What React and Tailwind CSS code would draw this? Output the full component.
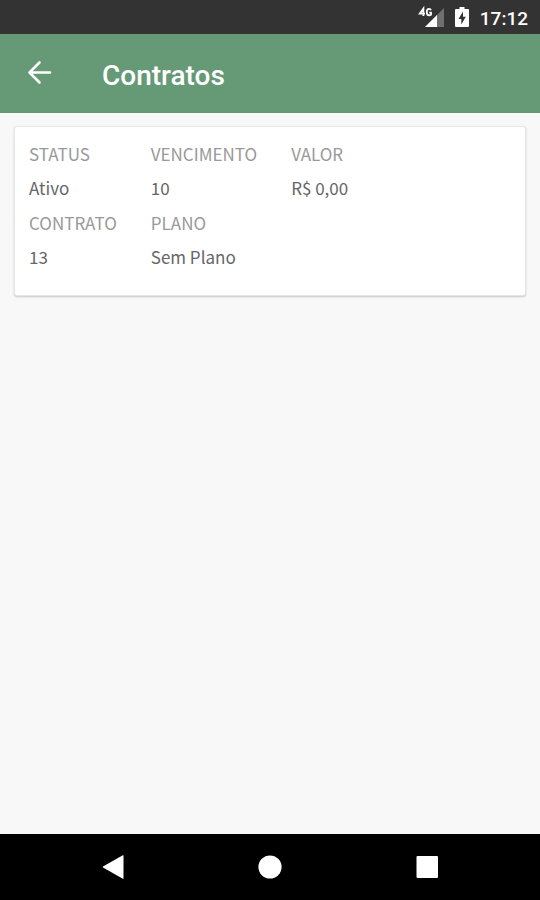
import React from 'react';

const contract = [
  { label: 'STATUS', value: 'Ativo' },
  { label: 'VENCIMENTO', value: '10' },
  { label: 'VALOR', value: 'R$ 0,00' },
  { label: 'CONTRATO', value: '13' },
  { label: 'PLANO', value: 'Sem Plano' },
];

const SignalIcon = () => (
  <svg className="w-7 h-6" viewBox="0 0 28 24" aria-hidden="true">
    <path d="M26 3V22H7Z" fill="#6f6f6f" />
    <path d="M19 10V22H7Z" fill="#fff" />
    {/* 4G mark */}
    <path d="M5.4 11V3.6L1.8 8.6H7" fill="none" stroke="#fff" strokeWidth="1.8" />
    <path d="M13 5.2C12.5 4.1 11.8 3.8 11 3.8C9.5 3.8 8.8 5 8.8 7.1C8.8 9.4 9.6 10.4 11 10.4C11.8 10.4 12.6 10.1 13 9.6V7.6H11.2" fill="none" stroke="#fff" strokeWidth="1.8" />
  </svg>
);

const BatteryIcon = () => (
  <svg className="w-4 h-6" viewBox="0 0 16 24" aria-hidden="true">
    <path d="M5.5 2H10.5V4H14Q15 4 15 5V21Q15 22 14 22H2Q1 22 1 21V5Q1 4 2 4H5.5Z" fill="#fff" />
    <path d="M9 6.5L4.5 14H7.3V19.5L11.8 11.8H9Z" fill="#333" />
  </svg>
);

const StatusBar = () => (
  <div className="h-[34px] shrink-0 bg-[#333333] flex items-center justify-end pr-3 text-white">
    <SignalIcon />
    <div className="ml-2">
      <BatteryIcon />
    </div>
    <span className="ml-[10px] mt-1 text-[19px] leading-6 font-medium">17:12</span>
  </div>
);

const Header = () => (
  <header className="h-[79px] shrink-0 bg-[#669975] flex items-center pl-6 text-white">
    <button type="button" aria-label="Voltar" className="w-8 h-8 mb-1 flex items-center justify-center">
      <svg className="w-8 h-8" viewBox="0 0 32 32" fill="none" stroke="currentColor" strokeWidth="2.6" strokeLinecap="round" strokeLinejoin="round">
        <path d="M26 16.5H5.5M15.5 6.5L5.5 16.5L15.5 26.5" />
      </svg>
    </button>
    <h1 className="ml-[46px] mt-1 text-[28px] leading-8 font-medium">Contratos</h1>
  </header>
);

const ContractCard = () => (
  <section className="m-[14px] mt-[13px] px-[14px] pt-[10px] pb-[21px] bg-white rounded-[3px] border border-[#e6e6e6] shadow-[0_1px_2px_rgba(0,0,0,0.2)]">
    <dl className="grid grid-cols-[auto_auto_1fr] gap-x-[34px] gap-y-px text-[17px] leading-[34px] font-['Noto_Sans_CJK_SC',sans-serif]">
      {contract.map((field) => (
        <div key={field.label}>
          <dt className="text-[#999999]">{field.label}</dt>
          <dd className="text-[#666666]">{field.value}</dd>
        </div>
      ))}
    </dl>
  </section>
);

const NavBar = () => (
  <nav className="h-[66px] shrink-0 bg-black px-[34px] grid grid-cols-3 items-center justify-items-center text-white">
    <button type="button" aria-label="Voltar">
      <svg className="w-6 h-6" viewBox="0 0 24 24" fill="currentColor">
        <path d="M22.5 0.6V23.4Q22.5 24 21.8 23.7L2 12.6Q1.3 12 2 11.4L21.8 0.3Q22.5 0 22.5 0.6Z" />
      </svg>
    </button>
    <button type="button" aria-label="Início">
      <svg className="w-6 h-6" viewBox="0 0 24 24" fill="currentColor">
        <circle cx="12" cy="12" r="11.6" />
      </svg>
    </button>
    <button type="button" aria-label="Recentes">
      <svg className="w-6 h-6" viewBox="0 0 24 24" fill="currentColor">
        <rect x="1.5" y="1" width="21.5" height="22" rx="1" />
      </svg>
    </button>
  </nav>
);

const App = () => {
  return (
    <div className="min-h-screen bg-[#f8f8f8] flex flex-col font-['Roboto',sans-serif]">
      <StatusBar />
      <Header />
      <main className="flex-1">
        <ContractCard />
      </main>
      <NavBar />
    </div>
  );
};

export default App;
